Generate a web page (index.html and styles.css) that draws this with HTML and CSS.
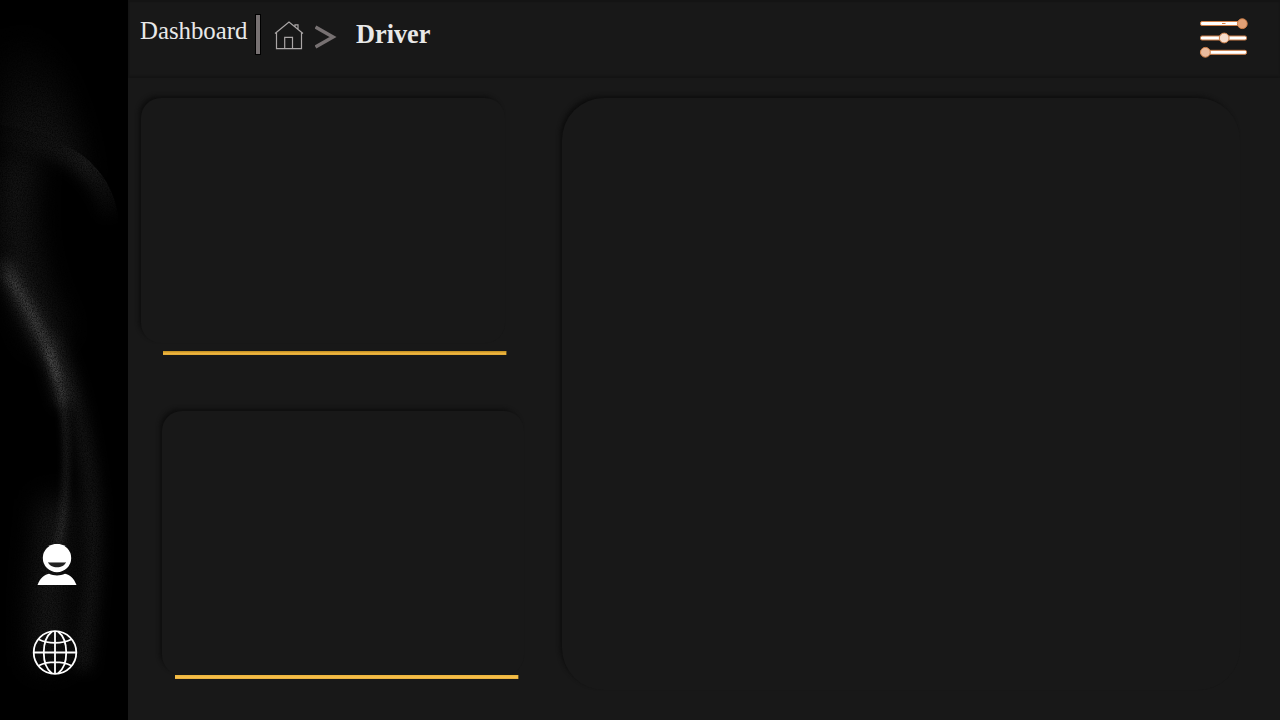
FILE: index.html
```html
<!DOCTYPE html>
<html lang="en">
<head>
<meta charset="utf-8">
<title>Dashboard</title>
<link rel="stylesheet" href="styles.css">
</head>
<body>
<div class="app">
  <aside class="sidebar">
    <svg class="smoke" width="128" height="720" viewBox="0 0 128 720">
      <defs>
        <filter id="b3" filterUnits="userSpaceOnUse" x="-80" y="-60" width="300" height="840"><feGaussianBlur stdDeviation="3"/></filter>
        <filter id="b7" filterUnits="userSpaceOnUse" x="-80" y="-60" width="300" height="840"><feGaussianBlur stdDeviation="7"/></filter>
        <filter id="b14" filterUnits="userSpaceOnUse" x="-80" y="-60" width="300" height="840"><feGaussianBlur stdDeviation="14"/></filter>
        <filter id="grain" x="0" y="0" width="100%" height="100%">
          <feTurbulence type="fractalNoise" baseFrequency="0.8" numOctaves="2" seed="4"/>
          <feColorMatrix values="0 0 0 0 0  0 0 0 0 0  0 0 0 0 0  1.4 0 0 0 -0.45"/>
        </filter>
        <linearGradient id="haze" x1="0" y1="0" x2="0" y2="1"><stop offset="0" stop-color="#fff" stop-opacity="0"/><stop offset="1" stop-color="#fff" stop-opacity=".11"/></linearGradient>
        <linearGradient id="edge" gradientUnits="userSpaceOnUse" x1="0" y1="125" x2="118" y2="225"><stop offset="0" stop-color="#fff" stop-opacity=".03"/><stop offset=".6" stop-color="#fff" stop-opacity=".11"/><stop offset="1" stop-color="#fff" stop-opacity="0"/></linearGradient>
        <clipPath id="dome"><path d="M0 125C35 131 65 143 82 155C102 170 114 190 118 215V720H0Z"/></clipPath>
      </defs>
      <rect width="128" height="720" fill="#000"/>
      <path d="M0 30H35C57 60 76 115 84 180L0 160Z" fill="url(#haze)" filter="url(#b14)"/>
      <g clip-path="url(#dome)">
        <rect y="120" width="128" height="600" fill="#000"/>
        <path d="M0 125C35 131 65 143 82 155C102 170 114 190 118 215" fill="none" stroke="url(#edge)" stroke-width="34" filter="url(#b7)"/>
        <path d="M22 150C8 225 20 280 52 340" fill="none" stroke="#fff" stroke-opacity=".09" stroke-width="36" filter="url(#b14)"/>
        <path d="M5 262C17 295 35 318 46 348C55 370 60 385 64 405" fill="none" stroke="#fff" stroke-opacity=".16" stroke-width="14" filter="url(#b7)"/>
        <path d="M8 275C30 308 48 342 58 380" fill="none" stroke="#fff" stroke-opacity=".08" stroke-width="9" filter="url(#b3)"/>
        <path d="M47 350C59 375 65 410 66 445C67 485 65 515 58 545" fill="none" stroke="#fff" stroke-opacity=".13" stroke-width="6" filter="url(#b3)"/>
        <path d="M52 335C75 385 86 440 92 500C96 560 90 610 83 670" fill="none" stroke="#fff" stroke-opacity=".09" stroke-width="16" filter="url(#b7)"/>
        <path d="M57 500C53 550 45 600 50 665" fill="none" stroke="#fff" stroke-opacity=".11" stroke-width="32" filter="url(#b14)"/>
      </g>
      <rect width="128" height="720" filter="url(#grain)"/>
    </svg>
    <nav class="side-nav">
      <svg class="user" width="40" height="42" viewBox="0 0 40 42">
        <circle cx="20" cy="14" r="14.200" fill="#fff"/>
        <path d="M11 18H29C27 25 13 25 11 18Z" fill="#222"/>
        <path d="M11 18.500H29" stroke="#888" stroke-width="1"/>
        <path d="M.5 41C3 34.500 7 30.500 12 29.800C17 32 23 32 28 29.800C33 30.500 37 34.500 39.500 41Z" fill="#fff"/>
      </svg>
      <svg class="globe" width="46" height="46" viewBox="0 0 46 46" fill="none" stroke="#fff" stroke-width="1.800">
        <circle cx="23" cy="22.500" r="21.300"/>
        <path d="M23 1V44M2 22.500H44M20 1.500C9 10 9 35 20 43.500M26 1.500C37 10 37 35 26 43.500M7 9.500C16 14 30 14 39 9.500M7 35.500C16 31 30 31 39 35.500"/>
      </svg>
    </nav>
  </aside>
  <main class="main">
    <header class="topbar">
      <span class="title">Dashboard</span>
      <span class="divider"></span>
      <svg class="home" width="30" height="30" viewBox="0 0 30 30" fill="none" stroke="#aaa6a6" stroke-width="1.200">
        <path d="M1 12.500L15 1L29 12.500M2.500 11.500V27.700H27.500V11.500M10.700 27.700V16.300H18.500V27.700M21 5.500V3.800H24V8.500"/>
      </svg>
      <svg class="chevron" width="22" height="24" viewBox="0 0 22 24"><path d="M.5 2L18 12L.5 22" fill="none" stroke="#777172" stroke-width="3.500"/></svg>
      <span class="crumb">Driver</span>
      <svg class="sliders" width="50" height="40" viewBox="0 0 50 40" stroke="#cf7f48">
        <g fill="#fff" stroke-width="1">
          <rect x="1.500" y="3.500" width="46" height="4" rx="1.500"/>
          <rect x="1.500" y="18" width="46" height="4" rx="1.500"/>
          <rect x="1.500" y="32.300" width="46" height="4" rx="1.500"/>
        </g>
        <path d="M23 5.500H26.500" stroke-width="1"/>
        <circle cx="43.300" cy="5.700" r="4.900" fill="#e2a176"/>
        <circle cx="25.200" cy="20" r="4.900" fill="#f6dccb"/>
        <circle cx="6.400" cy="34.300" r="4.900" fill="#ebbc9e"/>
      </svg>
    </header>
    <div class="content">
      <div class="column">
        <section class="card card-first"></section>
        <div class="rule rule-first"></div>
        <section class="card card-second"></section>
        <div class="rule rule-second"></div>
      </div>
      <section class="card panel"></section>
    </div>
  </main>
</div>
</body>
</html>
```
FILE: styles.css
```css
* { box-sizing: border-box; }
body { margin: 0; background: #181818; font-family: "Liberation Serif", "Times New Roman", serif; }
svg { display: block; flex: none; }
.app { display: flex; width: 1280px; height: 720px; overflow: hidden; }
.sidebar { position: relative; flex: 0 0 128px; background: #000; display: flex; flex-direction: column; justify-content: flex-end; }
.smoke { position: absolute; inset: 0; }
.side-nav { position: relative; display: flex; flex-direction: column; gap: 44px; padding: 0 0 44px 32px; }
.user { margin-left: 5px; }
.main { flex: 1; display: flex; flex-direction: column; background: #181818; }
.topbar { height: 78px; display: flex; align-items: flex-start; padding: 0 31px 0 12px; box-shadow: inset 1px 2px 1px #141414, inset 0 -2px 2px #141414; }
.title { width: 108px; margin-top: 17px; font-size: 24.800px; line-height: 28px; color: #e8e8e8; white-space: nowrap; }
.divider { width: 6px; height: 41px; margin: 14px 0 0 7px; background: #777172; border: 1px solid #000; }
.home { margin: 21px 0 0 13px; }
.chevron { margin: 25px 0 0 11px; }
.crumb { margin: 20px 0 0 19px; font-size: 26.300px; line-height: 30px; font-weight: bold; color: #e8e8e8; }
.sliders { margin: 18px 0 0 auto; }
.content { flex: 1; display: flex; padding: 20px 0 0 13px; }
.column { width: 421px; display: flex; flex-direction: column; }
.card { flex: none; background: #181818; border-radius: 20px; box-shadow: -3px -3px 4px -1px #0d0d0d; }
.card-first { width: 364px; height: 245px; }
.card-second { width: 362px; height: 264px; margin: 56px 0 0 21px; }
.rule { flex: none; width: 344px; height: 4px; background: linear-gradient(#bd8c20, #f0b53d 60%, #dba838); border-right: 1px solid #66501f; }
.rule-first { margin: 8px 0 0 22px; }
.rule-second { margin: 0 0 0 34px; background: linear-gradient(#e9b33b, #f9c04b 60%, #e0a93a); }
.panel { width: 678px; height: 592px; border-radius: 42px; }
```
